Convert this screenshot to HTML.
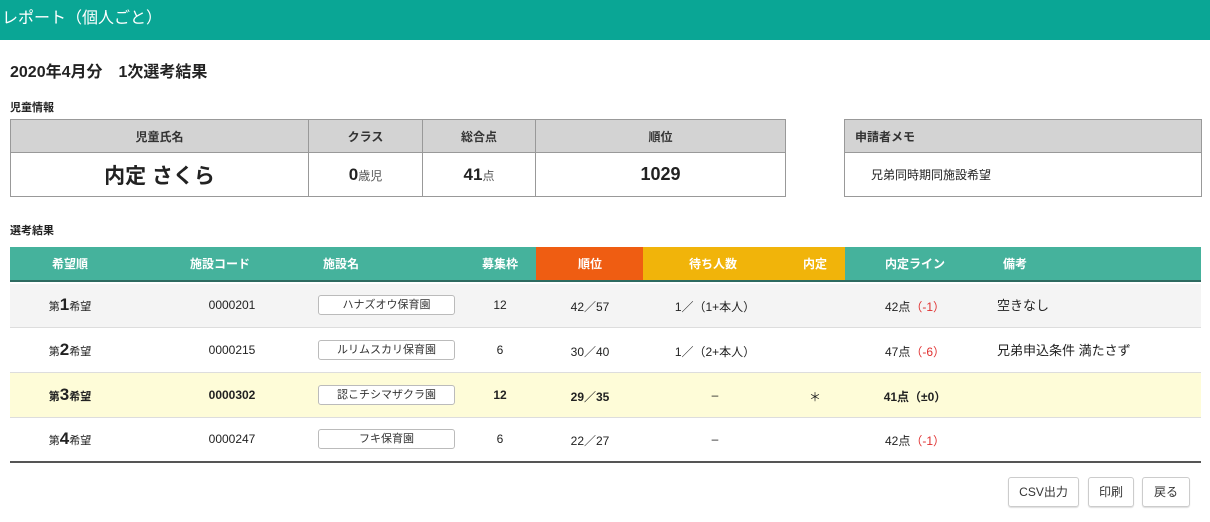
<!DOCTYPE html>
<html><head><meta charset="utf-8"><style>
*{margin:0;padding:0;box-sizing:border-box}
body{width:1210px;height:522px;background:#fff;font-family:"Liberation Sans","Noto Sans CJK JP",sans-serif;color:#222;position:relative;overflow:hidden}
.a{position:absolute}
.hdr{left:0;top:0;width:1210px;height:40px;background:#0aa695;color:#fff;font-size:16px;line-height:38px;padding-left:2px}
table{border-collapse:collapse;position:absolute}
.t1 td{border:1px solid #999;text-align:center}
.t1 tr.h td{background:#d3d3d3;height:33px;font-size:12px;font-weight:bold;color:#333}
.t1 tr.b td{height:44px}
.c{text-align:center}
.th{height:35px;top:247px;color:#fff;font-size:12px;font-weight:bold;line-height:35px;border-bottom:2px solid #2d6a60}
.row{left:10px;width:1191px;border-bottom:1px solid #ddd}
.cell{position:absolute;font-size:12px;text-align:center}
.box{position:absolute;left:318px;width:137px;height:20px;border:1px solid #bbb;border-radius:3px;background:#fff;font-size:11px;text-align:center;line-height:18px;color:#333}
.red{color:#e03030}
.btn{position:absolute;top:477px;height:30px;border:1px solid #ccc;border-radius:3px;font-size:12px;line-height:28px;text-align:center;color:#333;box-shadow:0 1px 1px #ddd}
</style></head><body>
<div class="a hdr">レポート（個人ごと）</div>
<div class="a" style="left:10px;top:58px;font-size:16px;font-weight:bold">2020年4月分　1次選考結果</div>
<div class="a" style="left:10px;top:99px;font-size:11px;font-weight:bold">児童情報</div>
<table class="t1" style="left:10px;top:119px;width:776px">
<tr class="h"><td style="width:298px">児童氏名</td><td style="width:114px">クラス</td><td style="width:113px">総合点</td><td>順位</td></tr>
<tr class="b"><td style="font-size:21px;font-weight:bold">内定 さくら</td><td><b style="font-size:17px">0</b><span style="font-size:12px;color:#555">歳児</span></td><td><b style="font-size:17px">41</b><span style="font-size:12px;color:#555">点</span></td><td style="font-size:18px;font-weight:bold">1029</td></tr>
</table>
<table class="t1" style="left:844px;top:119px;width:358px">
<tr class="h"><td style="text-align:left;padding-left:10px">申請者メモ</td></tr>
<tr class="b"><td style="text-align:left;padding-left:26px;font-size:12px">兄弟同時期同施設希望</td></tr>
</table>
<div class="a" style="left:10px;top:222px;font-size:11px;font-weight:bold">選考結果</div>
<div class="a th" style="left:10px;width:526px;background:#45b29c"></div>
<div class="a th" style="left:536px;width:107px;background:#ef5d12"></div>
<div class="a th" style="left:643px;width:202px;background:#f1b40a"></div>
<div class="a th" style="left:845px;width:356px;background:#45b29c"></div>
<div class="a th c" style="left:30px;width:80px;border:0">希望順</div>
<div class="a th c" style="left:180px;width:80px;border:0">施設コード</div>
<div class="a th" style="left:323px;border:0">施設名</div>
<div class="a th c" style="left:470px;width:60px;border:0">募集枠</div>
<div class="a th c" style="left:560px;width:60px;border:0">順位</div>
<div class="a th c" style="left:673px;width:80px;border:0">待ち人数</div>
<div class="a th c" style="left:795px;width:40px;border:0">内定</div>
<div class="a th c" style="left:870px;width:90px;border:0">内定ライン</div>
<div class="a th" style="left:1003px;border:0">備考</div>

<div class="a row" style="top:284px;height:44px;background:#f4f4f4"></div>
<div class="a row" style="top:328px;height:45px"></div>
<div class="a row" style="top:373px;height:45px;background:#fefcd8"></div>
<div class="a row" style="top:418px;height:45px;border-bottom:2px solid #555"></div>

<div class="a" style="top:295px;left:0;width:1210px;height:20px">
<div class="cell" style="left:28px;width:84px;font-size:11px">第<b style="font-size:17px">1</b>希望</div>
<div class="cell" style="left:192px;width:80px;top:3px">0000201</div>
<div class="box" style="top:0">ハナズオウ保育園</div>
<div class="cell" style="left:470px;width:60px;top:3px">12</div>
<div class="cell" style="left:560px;width:60px;top:3px">42／57</div>
<div class="cell" style="left:665px;width:100px;top:3px">1／（1+本人）</div>
<div class="cell" style="left:870px;width:90px;top:3px">42点<span class="red">（-1）</span></div>
<div class="cell" style="left:997px;top:0;font-size:13px;text-align:left">空きなし</div>
</div>
<div class="a" style="top:340px;left:0;width:1210px;height:20px">
<div class="cell" style="left:28px;width:84px;font-size:11px">第<b style="font-size:17px">2</b>希望</div>
<div class="cell" style="left:192px;width:80px;top:3px">0000215</div>
<div class="box" style="top:0">ルリムスカリ保育園</div>
<div class="cell" style="left:470px;width:60px;top:3px">6</div>
<div class="cell" style="left:560px;width:60px;top:3px">30／40</div>
<div class="cell" style="left:665px;width:100px;top:3px">1／（2+本人）</div>
<div class="cell" style="left:870px;width:90px;top:3px">47点<span class="red">（-6）</span></div>
<div class="cell" style="left:997px;top:0;font-size:13px;text-align:left;white-space:nowrap">兄弟申込条件 満たさず</div>
</div>
<div class="a" style="top:385px;left:0;width:1210px;height:20px;font-weight:bold">
<div class="cell" style="left:28px;width:84px;font-size:11px">第<b style="font-size:17px">3</b>希望</div>
<div class="cell" style="left:192px;width:80px;top:3px">0000302</div>
<div class="box" style="top:0;font-weight:normal">認こチシマザクラ園</div>
<div class="cell" style="left:470px;width:60px;top:3px">12</div>
<div class="cell" style="left:560px;width:60px;top:3px">29／35</div>
<div class="cell" style="left:665px;width:100px;top:3px;font-weight:normal">–</div>
<div class="cell" style="left:795px;width:40px;top:3px;font-weight:normal">＊</div>
<div class="cell" style="left:870px;width:90px;top:3px">41点（±0）</div>
</div>
<div class="a" style="top:429px;left:0;width:1210px;height:20px">
<div class="cell" style="left:28px;width:84px;font-size:11px">第<b style="font-size:17px">4</b>希望</div>
<div class="cell" style="left:192px;width:80px;top:3px">0000247</div>
<div class="box" style="top:0">フキ保育園</div>
<div class="cell" style="left:470px;width:60px;top:3px">6</div>
<div class="cell" style="left:560px;width:60px;top:3px">22／27</div>
<div class="cell" style="left:665px;width:100px;top:3px">–</div>
<div class="cell" style="left:870px;width:90px;top:3px">42点<span class="red">（-1）</span></div>
</div>

<div class="btn" style="left:1008px;width:71px">CSV出力</div>
<div class="btn" style="left:1088px;width:46px">印刷</div>
<div class="btn" style="left:1142px;width:48px">戻る</div>
</body></html>
